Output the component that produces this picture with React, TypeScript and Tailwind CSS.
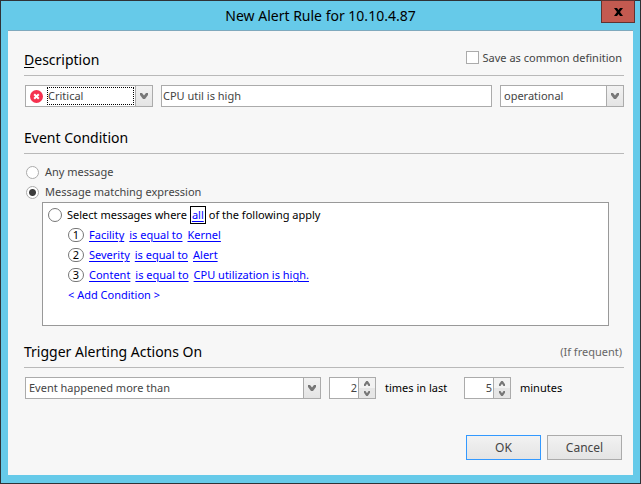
import { useState } from 'react';
import type { ReactNode } from 'react';

const CONDITIONS = [
    { field: 'Facility', operator: 'is equal to', value: 'Kernel' },
    { field: 'Severity', operator: 'is equal to', value: 'Alert' },
    { field: 'Content', operator: 'is equal to', value: 'CPU utilization is high.' },
];

const Chevron = ({ up = false, small = false }: { up?: boolean; small?: boolean }) => (
    <svg width={small ? 6 : 8} height={small ? 5 : 6} viewBox="0 0 8 6" preserveAspectRatio="none" fill="#777" aria-hidden="true">
        <path d={up ? 'M0 6V4L3 0h2l3 4v2H6L4 3.4 2 6z' : 'M0 0v2l3 4h2l3-4V0H6L4 2.6 2 0z'} />
    </svg>
);

const CriticalIcon = () => (
    <svg width="13" height="13" viewBox="0 0 13 13" className="shrink-0" aria-hidden="true">
        <circle cx="6.5" cy="6.5" r="6.5" fill="#f5314f" />
        <path d="M4.2 4.2l4.6 4.6M8.8 4.2l-4.6 4.6" stroke="#fff" strokeWidth="2" />
    </svg>
);

interface DropdownProps {
    label: string;
    options: string[];
    className?: string;
    selectClass?: string;
    icon?: ReactNode;
}

const Dropdown = ({ label, options, className = '', selectClass = 'pl-[3px]', icon }: DropdownProps) => (
    <div className={`relative flex h-[22px] items-center border border-[#ababab] bg-white ${className}`}>
        {icon}
        <select aria-label={label} className={`min-w-0 flex-1 appearance-none bg-transparent text-[#444] outline-none ${selectClass}`}>
            {options.map(o => <option key={o}>{o}</option>)}
        </select>
        <span className="pointer-events-none flex h-full w-[17px] shrink-0 items-center justify-center border-l border-[#ababab] bg-linear-to-b from-[#f2f2f2] to-[#e4e4e4]">
            <Chevron />
        </span>
    </div>
);

const Spinner = ({ label, initial }: { label: string; initial: number }) => {
    const [value, setValue] = useState(initial);

    return (
        <div className="flex h-[22px] w-[47px] border border-[#ababab] bg-white">
            <input
                aria-label={label}
                inputMode="numeric"
                value={value}
                onChange={e => setValue(Number(e.target.value) || 0)}
                className="w-0 min-w-0 flex-1 pr-px text-right text-[#444] outline-none"
            />
            <div className="flex w-[17px] flex-col border-l border-[#ababab] bg-[#ececec]">
                <button type="button" aria-label={`Increase ${label}`} onClick={() => setValue(value + 1)} className="flex flex-1 items-center justify-center bg-[#f2f2f2]">
                    <Chevron up small />
                </button>
                <button type="button" aria-label={`Decrease ${label}`} onClick={() => setValue(Math.max(0, value - 1))} className="flex flex-1 items-center justify-center bg-[#e6e6e6]">
                    <Chevron small />
                </button>
            </div>
        </div>
    );
};

const SectionHeader = ({ title, children }: { title: ReactNode; children?: ReactNode }) => (
    <div className="flex h-8 items-center justify-between border-b border-[#b9b9b9] pr-0.5">
        <h2 className="text-sm text-black">{title}</h2>
        {children}
    </div>
);

const radioClass = 'size-[13px] shrink-0 appearance-none rounded-full border border-[#ababab] bg-white checked:bg-[radial-gradient(circle,#3c3c3c_3px,#fff_4px)]';

export default function App() {
    const [mode, setMode] = useState('expression');

    return (
        <main className="flex min-h-screen flex-col border border-[#2f3236] bg-[#66cae9] px-[7px] pb-2 font-['Noto_Sans',sans-serif] text-[11px] leading-4">
            {/* Title bar */}
            <header className="relative flex h-[29px] shrink-0 items-center justify-center">
                <h1 className="text-sm text-black">New Alert Rule for 10.10.4.87</h1>
                <button type="button" aria-label="Close" className="absolute -top-px -right-[2px] flex h-[23px] w-[34px] items-center justify-center border border-[#5f3331] bg-[#c35a50]">
                    <svg width="9" height="8" viewBox="0 0 9 8" aria-hidden="true">
                        <path d="M0 0h3l1.5 2L6 0h3L6 4l3 4H6L4.5 6 3 8H0l3-4z" fill="#000" />
                    </svg>
                </button>
            </header>

            <form onSubmit={e => e.preventDefault()} className="flex flex-1 flex-col border-t border-[#7fa9bd] bg-[#f7f7f7] pt-[13px] pr-[9px] pb-[15px] pl-4 text-[#444]">
                <section>
                    <SectionHeader title={<><u className="underline-offset-2">D</u>escription</>}>
                        <label className="mb-1 flex items-center gap-1">
                            <input type="checkbox" className="size-[13px] appearance-none border border-[#ababab] bg-white checked:bg-[#777]" />
                            Save as common definition
                        </label>
                    </SectionHeader>
                    <div className="mt-[9px] flex gap-2 pl-px">
                        <Dropdown label="Severity" options={['Critical', 'Warning', 'Info']} className="w-32" selectClass="mr-px h-[18px] border border-dotted border-black" icon={<span className="px-1"><CriticalIcon /></span>} />
                        <input aria-label="Description" defaultValue="CPU util is high" className="h-[22px] min-w-0 flex-1 border border-[#ababab] bg-white px-px pb-0.5 text-[#444] outline-none" />
                        <Dropdown label="State" options={['operational', 'maintenance']} className="w-[124px]" />
                    </div>
                </section>

                <section className="mt-[15px]">
                    <SectionHeader title="Event Condition" />
                    <div className="mt-2 flex flex-col pl-0.5">
                        <label className="flex h-5 items-center gap-1.5">
                            <input type="radio" name="mode" checked={mode === 'any'} onChange={() => setMode('any')} className={radioClass} />
                            Any message
                        </label>
                        <label className="flex h-5 items-center gap-1.5">
                            <input type="radio" name="mode" checked={mode === 'expression'} onChange={() => setMode('expression')} className={radioClass} />
                            Message matching expression
                        </label>
                    </div>
                    <div className="mr-[15px] ml-[18px] h-[124px] border border-[#999] bg-white pt-0.5 pl-[5px] text-black">
                        <div className="flex h-5 items-center">
                            <span className="mr-[5px] size-3.5 rounded-full border border-[#777]" />
                            Select messages where
                            <a href="#all" className="mx-[3px] border border-black px-px text-[#0000ff] underline underline-offset-2">all</a>
                            of the following apply
                        </div>
                        <ol className="pl-5">
                            {CONDITIONS.map((c, i) => (
                                <li key={c.field} className="flex h-5 items-center gap-[5px] text-[#0000ff]">
                                    <span className="flex h-3.5 w-4 items-center justify-center rounded-full border border-[#777] text-black">{i + 1}</span>
                                    <a href="#field" className="underline underline-offset-2">{c.field}</a>
                                    <a href="#operator" className="underline underline-offset-2">{c.operator}</a>
                                    <a href="#value" className="underline underline-offset-2">{c.value}</a>
                                </li>
                            ))}
                        </ol>
                        <button type="button" className="ml-5 h-5 text-[#0000ff]">&lt; Add Condition &gt;</button>
                    </div>
                </section>

                <section className="mt-[10px]">
                    <SectionHeader title="Trigger Alerting Actions On">
                        <span className="text-[#666]">(If frequent)</span>
                    </SectionHeader>
                    <div className="mt-[9px] flex items-center pl-px text-black">
                        <Dropdown label="Trigger" options={['Event happened more than', 'Event happened less than']} className="mr-2 w-[296px]" />
                        <Spinner label="times" initial={2} />
                        <span className="w-[88px] pl-[9px]">times in last</span>
                        <Spinner label="minutes" initial={5} />
                        <span className="pl-[9px]">minutes</span>
                    </div>
                </section>

                <footer className="mt-auto flex justify-end gap-1.5 pr-0.5">
                    <button type="submit" className="h-[25px] w-[75px] border border-[#3399ff] bg-linear-to-b from-[#f2f2f2] to-[#e4e4e4] text-xs">OK</button>
                    <button type="button" className="h-[25px] w-[75px] border border-[#ababab] bg-linear-to-b from-[#f2f2f2] to-[#e4e4e4] text-xs">Cancel</button>
                </footer>
            </form>
        </main>
    );
}
